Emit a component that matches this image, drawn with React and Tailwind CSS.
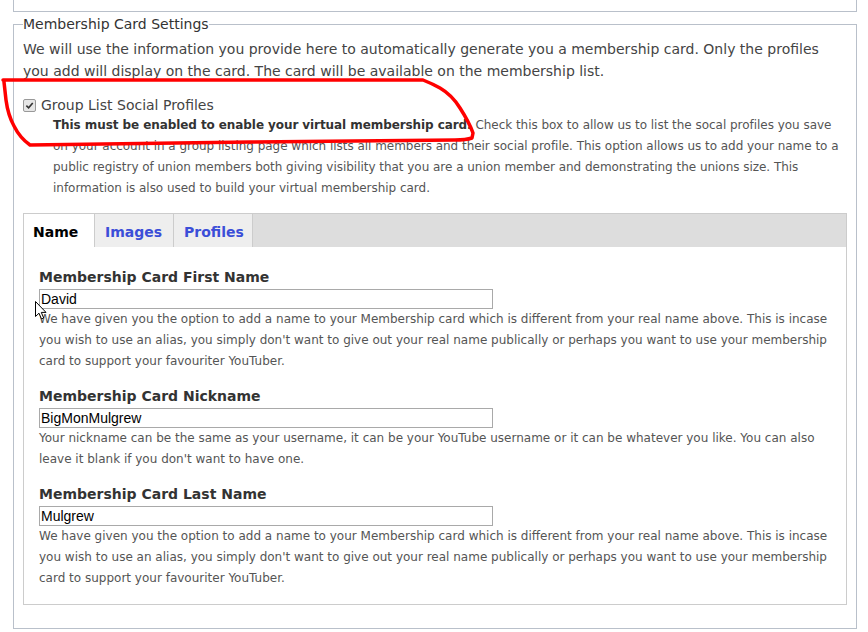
import React from "react";

const F = { fontFamily: '"DejaVu Sans", Verdana, sans-serif' };

function Field({ label, value, lines }) {
  return (
    <div className="mt-[14px] first:mt-0">
      <div className="text-[14px] leading-[20px] font-bold text-[#333]">{label}</div>
      <input
        readOnly
        value={value}
        className="mt-[2px] block w-[454px] h-[20px] border border-[#a9a9a9] px-[1px] text-[14px] text-black outline-none"
        style={{ fontFamily: '"Liberation Sans", Arial, sans-serif' }}
      />
      <p className="text-[12px] leading-[21px] text-[#555]">{lines}</p>
    </div>
  );
}

export default function App() {
  const desc =
    "We have given you the option to add a name to your Membership card which is different from your real name above. This is incase you wish to use an alias, you simply don't want to give out your real name publically or perhaps you want to use your membership card to support your favouriter YouTuber.";
  return (
    <div className="relative w-[868px] h-[632px] overflow-hidden bg-white" style={F}>
      <div className="ml-[13px] w-[844px] h-[12px] border-x border-b border-[#b9c0ca]" />
      <fieldset className="mt-[1px] ml-[13px] w-[844px] border border-[#b9c0ca] px-[9px] pt-[3px] pb-[23px]">
        <legend className="p-0 text-[14px] leading-[22px] text-[#333]">Membership Card Settings</legend>
        <p className="text-[14px] leading-[22px] text-[#444]">
          We will use the information you provide here to automatically generate you a membership card. Only the profiles you add will display on the card. The card will be available on the membership list.
        </p>
        <label className="mt-[13px] flex items-center gap-[5px] text-[14px] leading-[20px] text-[#444]">
          <span className="flex items-center justify-center w-[13px] h-[13px] rounded-[2px] border border-[#999] bg-[#e6e6e6]">
            <svg viewBox="0 0 10 10" className="w-[9px] h-[9px]">
              <path d="M1.5 5.2 L4 7.6 L8.6 2.2" fill="none" stroke="#333" strokeWidth="1.8" />
            </svg>
          </span>
          Group List Social Profiles
        </label>
        <p className="ml-[30px] text-[12px] leading-[21px] text-[#555] tracking-[-0.03px]">
          <b className="text-[#333] tracking-[-0.08px]">This must be enabled to enable your virtual membership card.</b> Check this box to allow us to list the socal profiles you save on your account in a group listing page which lists all members and their social profile. This option allows us to add your name to a public registry of union members both giving visibility that you are a union member and demonstrating the unions size. This information is also used to build your virtual membership card.
        </p>
        <div className="mt-[14px] border border-[#cccccc]">
          <div className="flex h-[33px] bg-[#dddddd]">
            <div className="w-[70px] bg-white pl-[9px] text-[14px] leading-[36px] font-bold text-black">Name</div>
            <div className="w-[79px] bg-[#eeeeee] border-l border-[#cccccc] pl-[10px] text-[14px] leading-[36px] font-bold text-[#3b4ed8]">Images</div>
            <div className="w-[80px] bg-[#eeeeee] border-x border-[#cccccc] pl-[10px] text-[14px] leading-[36px] font-bold text-[#3b4ed8]">Profiles</div>
          </div>
          <div className="px-[15px] pt-[20px] pb-[15px]">
            <Field label="Membership Card First Name" value="David" lines={desc} />
            <Field
              label="Membership Card Nickname"
              value="BigMonMulgrew"
              lines="Your nickname can be the same as your username, it can be your YouTube username or it can be whatever you like. You can also leave it blank if you don't want to have one."
            />
            <Field label="Membership Card Last Name" value="Mulgrew" lines={desc} />
          </div>
        </div>
      </fieldset>

      <svg className="pointer-events-none absolute left-0 top-0" width="868" height="632">
        <path
          d="M3 80 L120 80 L423 80 Q433 84 440 88 Q452 95 460 108 Q469 122 473 133 L472 138 Q466 140 455 140 L250 142 L30 145 Q20 138 14 126 Q8 115 6 100 L4 82"
          fill="none"
          stroke="#ff0000"
          strokeWidth="3.5"
          strokeLinejoin="round"
          strokeLinecap="round"
        />
      </svg>
      <svg className="pointer-events-none absolute left-[35px] top-[301px]" width="13" height="19" viewBox="0 0 13 19">
        <path d="M0.5 0.5 L0.5 15.5 L4 12.2 L6.5 18 L8.7 17 L6.3 11.4 L11 11.4 Z" fill="#fff" stroke="#000" strokeWidth="1" strokeLinejoin="round" />
      </svg>
    </div>
  );
}
